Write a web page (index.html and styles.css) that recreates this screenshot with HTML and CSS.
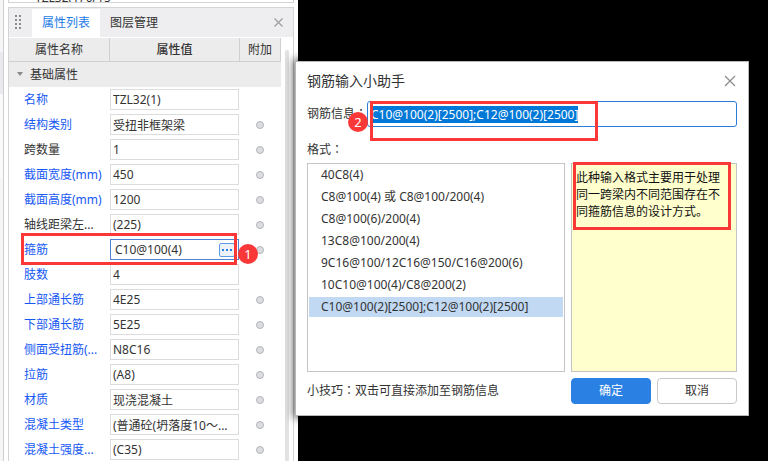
FILE: index.html
```
<!DOCTYPE html>
<html lang="zh-CN">
<head>
<meta charset="utf-8">
<title>钢筋输入小助手</title>
<link rel="stylesheet" href="styles.css">
</head>
<body>
<div class="workspace">
  <div class="rail"><span class="rail-tab"></span><span class="rail-gap"></span></div>
  <div class="dock">
    <div class="upper-panel"><span class="upper-text">TZL32(1) 0/15</span></div>
    <section class="panel">
      <div class="tabs">
        <svg class="grip" width="7" height="15" viewBox="0 0 7 15" aria-hidden="true">
          <path fill="#8c8c8c" d="M0 0h2v2H0zM4 0h2v2H4zM0 4h2v2H0zM4 4h2v2H4zM0 8h2v2H0zM4 8h2v2H4zM0 12h2v2H0zM4 12h2v2H4z"/>
        </svg>
        <button class="tab tab-active" type="button">属性列表</button>
        <button class="tab" type="button">图层管理</button>
        <button class="icon-button panel-close" type="button" aria-label="关闭面板">
          <svg width="9" height="9" viewBox="0 0 9 9"><path d="M.5.5l8 8M8.500.5l-8 8" stroke="#a0a0a0" stroke-width="1.300" fill="none"/></svg>
        </button>
      </div>
      <div class="panel-body">
        <table class="props">
          <colgroup><col><col class="col-value"><col class="col-extra"></colgroup>
          <thead><tr><th>属性名称</th><th class="th-strong">属性值</th><th>附加</th></tr></thead>
          <tbody>
            <tr class="group"><td colspan="3"><svg class="arrow" width="6" height="4" viewBox="0 0 6 4" aria-hidden="true"><path d="M0 0h6L3 4z" fill="#8a8a8a"/></svg>基础属性</td></tr>
            <tr><td><label class="link" for="p1">名称</label></td><td><input class="field" id="p1" value="TZL32(1)"></td><td></td></tr>
            <tr><td><label class="link" for="p2">结构类别</label></td><td><input class="field" id="p2" value="受扭非框架梁"></td><td><input type="checkbox" class="dot" aria-label="附加 结构类别"></td></tr>
            <tr><td><label for="p3">跨数量</label></td><td><input class="field" id="p3" value="1"></td><td><input type="checkbox" class="dot" aria-label="附加 跨数量"></td></tr>
            <tr><td><label class="link" for="p4">截面宽度(mm)</label></td><td><input class="field" id="p4" value="450"></td><td><input type="checkbox" class="dot" aria-label="附加 截面宽度"></td></tr>
            <tr><td><label class="link" for="p5">截面高度(mm)</label></td><td><input class="field" id="p5" value="1200"></td><td><input type="checkbox" class="dot" aria-label="附加 截面高度"></td></tr>
            <tr><td><label for="p6">轴线距梁左...</label></td><td><input class="field" id="p6" value="(225)"></td><td><input type="checkbox" class="dot" aria-label="附加 轴线距梁左"></td></tr>
            <tr><td><label class="link" for="p7">箍筋</label></td><td><div class="field field-active"><input id="p7" value="C10@100(4)"><button class="more" type="button" aria-label="更多"><svg width="10" height="2" viewBox="0 0 10 2"><path d="M0 0h2v2H0zM4 0h2v2H4zM8 0h2v2H8z" fill="#2a7de1"/></svg></button></div></td><td><input type="checkbox" class="dot" aria-label="附加 箍筋"></td></tr>
            <tr><td><label class="link" for="p8">肢数</label></td><td><input class="field" id="p8" value="4"></td><td></td></tr>
            <tr><td><label class="link" for="p9">上部通长筋</label></td><td><input class="field" id="p9" value="4E25"></td><td><input type="checkbox" class="dot" aria-label="附加 上部通长筋"></td></tr>
            <tr><td><label class="link" for="p10">下部通长筋</label></td><td><input class="field" id="p10" value="5E25"></td><td><input type="checkbox" class="dot" aria-label="附加 下部通长筋"></td></tr>
            <tr><td><label class="link" for="p11">侧面受扭筋(...</label></td><td><input class="field" id="p11" value="N8C16"></td><td><input type="checkbox" class="dot" aria-label="附加 侧面受扭筋"></td></tr>
            <tr><td><label class="link" for="p12">拉筋</label></td><td><input class="field" id="p12" value="(A8)"></td><td><input type="checkbox" class="dot" aria-label="附加 拉筋"></td></tr>
            <tr><td><label class="link" for="p13">材质</label></td><td><input class="field" id="p13" value="现浇混凝土"></td><td><input type="checkbox" class="dot" aria-label="附加 材质"></td></tr>
            <tr><td><label class="link" for="p14">混凝土类型</label></td><td><input class="field" id="p14" value="(普通砼(坍落度10～..."></td><td><input type="checkbox" class="dot" aria-label="附加 混凝土类型"></td></tr>
            <tr><td><label class="link" for="p15">混凝土强度...</label></td><td><input class="field" id="p15" value="(C35)"></td><td><input type="checkbox" class="dot" aria-label="附加 混凝土强度"></td></tr>
          </tbody>
        </table>
        <div class="scroll"><div class="thumb"></div></div>
      </div>
    </section>
  </div>
</div>

<div class="dialog" role="dialog" aria-labelledby="dialog-title">
  <header class="dialog-head">
    <h1 id="dialog-title">钢筋输入小助手</h1>
    <button class="icon-button" type="button" aria-label="关闭">
      <svg width="12" height="12" viewBox="0 0 12 12"><path d="M1 1l10 10M11 1L1 11" stroke="#8a8a8a" stroke-width="1.200" fill="none"/></svg>
    </button>
  </header>
  <div class="info-row">
    <label for="info">钢筋信息<span class="colon" lang="zh-Hant">：</span></label>
    <input id="info" class="info-input" value="C10@100(2)[2500];C12@100(2)[2500]">
  </div>
  <div class="format-label">格式<span class="colon" lang="zh-Hant">：</span></div>
  <div class="columns">
    <ul class="formats">
      <li>40C8(4)</li>
      <li>C8@100(4) 或 C8@100/200(4)</li>
      <li>C8@100(6)/200(4)</li>
      <li>13C8@100/200(4)</li>
      <li>9C16@100/12C16@150/C16@200(6)</li>
      <li>10C10@100(4)/C8@200(2)</li>
      <li class="selected">C10@100(2)[2500];C12@100(2)[2500]</li>
    </ul>
    <div class="hint">此种输入格式主要用于处理同一跨梁内不同范围存在不同箍筋信息的设计方式。</div>
  </div>
  <footer class="dialog-foot">
    <span class="tip">小技巧<span class="colon" lang="zh-Hant">：</span>双击可直接添加至钢筋信息</span>
    <button class="btn btn-primary" type="button">确定</button>
    <button class="btn" type="button">取消</button>
  </footer>
  <div class="mark mark-input"></div>
  <div class="mark mark-hint"></div>
  <div class="badge badge-two">2</div>
</div>
<div class="mark mark-row"></div>
<div class="badge badge-one">1</div>
<script src="app.js"></script>
</body>
</html>
```
FILE: styles.css
```
* {
  box-sizing: border-box;
}

body {
  position: relative;
  height: 100vh;
  margin: 0;
  overflow: hidden;
  background: #000;
  color: #333;
  font: 12px/16px "Noto Sans", "Noto Sans CJK SC", sans-serif;
}

button,
input {
  margin: 0;
  color: inherit;
  font: inherit;
}

.workspace {
  display: flex;
  width: 298px;
  height: 100%;
  background: #fff;
}

.rail {
  display: flex;
  flex-direction: column;
  width: 4px;
  padding-top: 52px;
  border-right: 1px solid #cfcfcf;
  background: #f5f6f8;
}

.rail-tab {
  height: 42px;
  background: #e9eaef;
}

.rail-gap {
  height: 84px;
  background: #fafafb;
}

.dock {
  display: flex;
  flex: 1;
  flex-direction: column;
  gap: 4px;
  padding: 0 4px;
}

.upper-panel {
  display: flex;
  flex: none;
  align-items: flex-end;
  height: 3px;
  padding-left: 26px;
  overflow: hidden;
  border: 1px solid #d4d4d4;
  border-top: 0;
}

.upper-text {
  height: 12px;
}

.panel {
  flex: 1;
  border: 1px solid #d4d4d4;
  border-bottom: 0;
}

.tabs {
  display: flex;
  align-items: center;
  height: 29px;
  background: #eeeef0;
}

.grip {
  margin: 0 10px 0 6px;
}

.tab {
  height: 28px;
  padding: 0 10px;
  border: 0;
  background: none;
}

.tab-active {
  background: #fff;
  color: #1a7ae6;
}

.icon-button {
  display: flex;
  padding: 0;
  border: 0;
  background: none;
}

.panel-close {
  margin: 0 10px 0 auto;
}

.panel-body {
  display: flex;
  gap: 4px;
  padding-top: 1px;
}

.props {
  width: 272px;
  border-spacing: 0;
  table-layout: fixed;
}

.col-value {
  width: 130px;
}

.col-extra {
  width: 41px;
}

.props th {
  height: 24px;
  padding: 0;
  border-right: 1px solid #d0d0d0;
  border-bottom: 1px solid #d0d0d0;
  background: #ececec;
  font-weight: 400;
}

.props .th-strong {
  font-weight: 500;
}

.props td {
  height: 25px;
  padding: 0;
  text-align: center;
  white-space: nowrap;
}

.props td:first-child {
  padding-left: 15px;
  text-align: left;
}

.props .group td {
  padding-left: 8px;
  background: #ececec;
}

.arrow {
  margin-right: 7px;
  vertical-align: 3px;
}

.link {
  color: #1658f5;
}

.field {
  display: block;
  width: 129px;
  height: 21px;
  padding: 0 2px;
  border: 1px solid #dcdcdc;
  border-radius: 0;
  outline: 0;
  background: #fff;
}

.field-active {
  display: flex;
  align-items: center;
  padding: 0 3px 0 4px;
  border-color: #4f83d1;
}

.field-active input {
  flex: 1;
  min-width: 0;
  padding: 0;
  border: 0;
  outline: 0;
}

.more {
  display: flex;
  align-items: center;
  justify-content: center;
  width: 16px;
  height: 14px;
  padding: 0;
  border: 1px solid #5b9be8;
  border-radius: 2px;
  background: #edf1f8;
}

.dot {
  display: block;
  width: 8px;
  height: 8px;
  margin: 0 0 0 16px;
  border: 1px solid #b4b5b9;
  border-radius: 50%;
  appearance: none;
  background: #dcdde0;
}

.scroll {
  width: 4px;
  padding-top: 12px;
}

.thumb {
  height: 100%;
  border-radius: 2px;
  background: #e2e2e2;
}

.dialog {
  position: absolute;
  top: 61px;
  right: 19px;
  left: 295px;
  padding: 0 11px 11px;
  border: 1px solid #b8b8b8;
  background: #fff;
  box-shadow: 0 0 8px 2px rgba(0, 0, 0, 0.6);
}

.dialog-head {
  display: flex;
  align-items: center;
  justify-content: space-between;
  height: 39px;
  padding: 0 1px 2px 0;
}

.dialog-head h1 {
  margin: 0;
  font-size: 14px;
  font-weight: 400;
}

.info-row {
  display: flex;
  align-items: center;
}

.info-row label {
  width: 60px;
  white-space: nowrap;
}

.colon {
  font-family: "Noto Sans CJK TC", sans-serif;
  line-height: 1;
}

.info-input {
  flex: 1;
  height: 26px;
  padding: 0 3px;
  border: 1px solid #2b7cd9;
  border-radius: 3px;
  outline: 0;
}

.info-input::selection {
  background: #0078d7;
  color: #fff;
}

.format-label {
  height: 36px;
  padding-top: 15px;
}

.columns {
  display: grid;
  grid-template-columns: 1fr 166px;
  gap: 6px;
}

.formats,
.hint {
  min-height: 209px;
  margin: 0;
  border: 1px solid #c4c4c4;
}

.formats {
  display: flex;
  flex-direction: column;
  gap: 2px;
  padding: 1px;
  list-style: none;
}

.formats li {
  padding: 2px 12px;
}

.selected {
  background: #c1d9f2;
}

.hint {
  padding: 5px 12px 5px 4px;
  background: #ffffcd;
  color: #111;
  line-height: 17px;
}

.dialog-foot {
  display: flex;
  align-items: center;
  gap: 6px;
  padding-top: 6px;
}

.tip {
  flex: 1;
}

.btn {
  width: 80px;
  height: 26px;
  padding: 0;
  border: 1px solid #c8c8c8;
  border-radius: 4px;
  background: #fff;
}

.btn-primary {
  border-color: #2b80e3;
  background: #2b80e3;
  color: #fff;
}

/* Annotations drawn over the interface */
.mark {
  position: absolute;
  border: 3px solid #fb3838;
  pointer-events: none;
}

.mark-row {
  top: 233px;
  left: 21px;
  width: 216px;
  height: 32px;
}

.mark-input {
  top: 39px;
  left: 74px;
  width: 228px;
  height: 40px;
}

.mark-hint {
  top: 100px;
  left: 277px;
  width: 158px;
  height: 68px;
}

.badge {
  position: absolute;
  width: 20px;
  height: 20px;
  border-radius: 50%;
  background: #fb3838;
  color: #fff;
  font-size: 13px;
  line-height: 20px;
  text-align: center;
}

.badge-one {
  top: 244px;
  left: 238px;
}

.badge-two {
  top: 50px;
  left: 52px;
}
```
FILE: app.js
```
document.getElementById("info").select();
```
